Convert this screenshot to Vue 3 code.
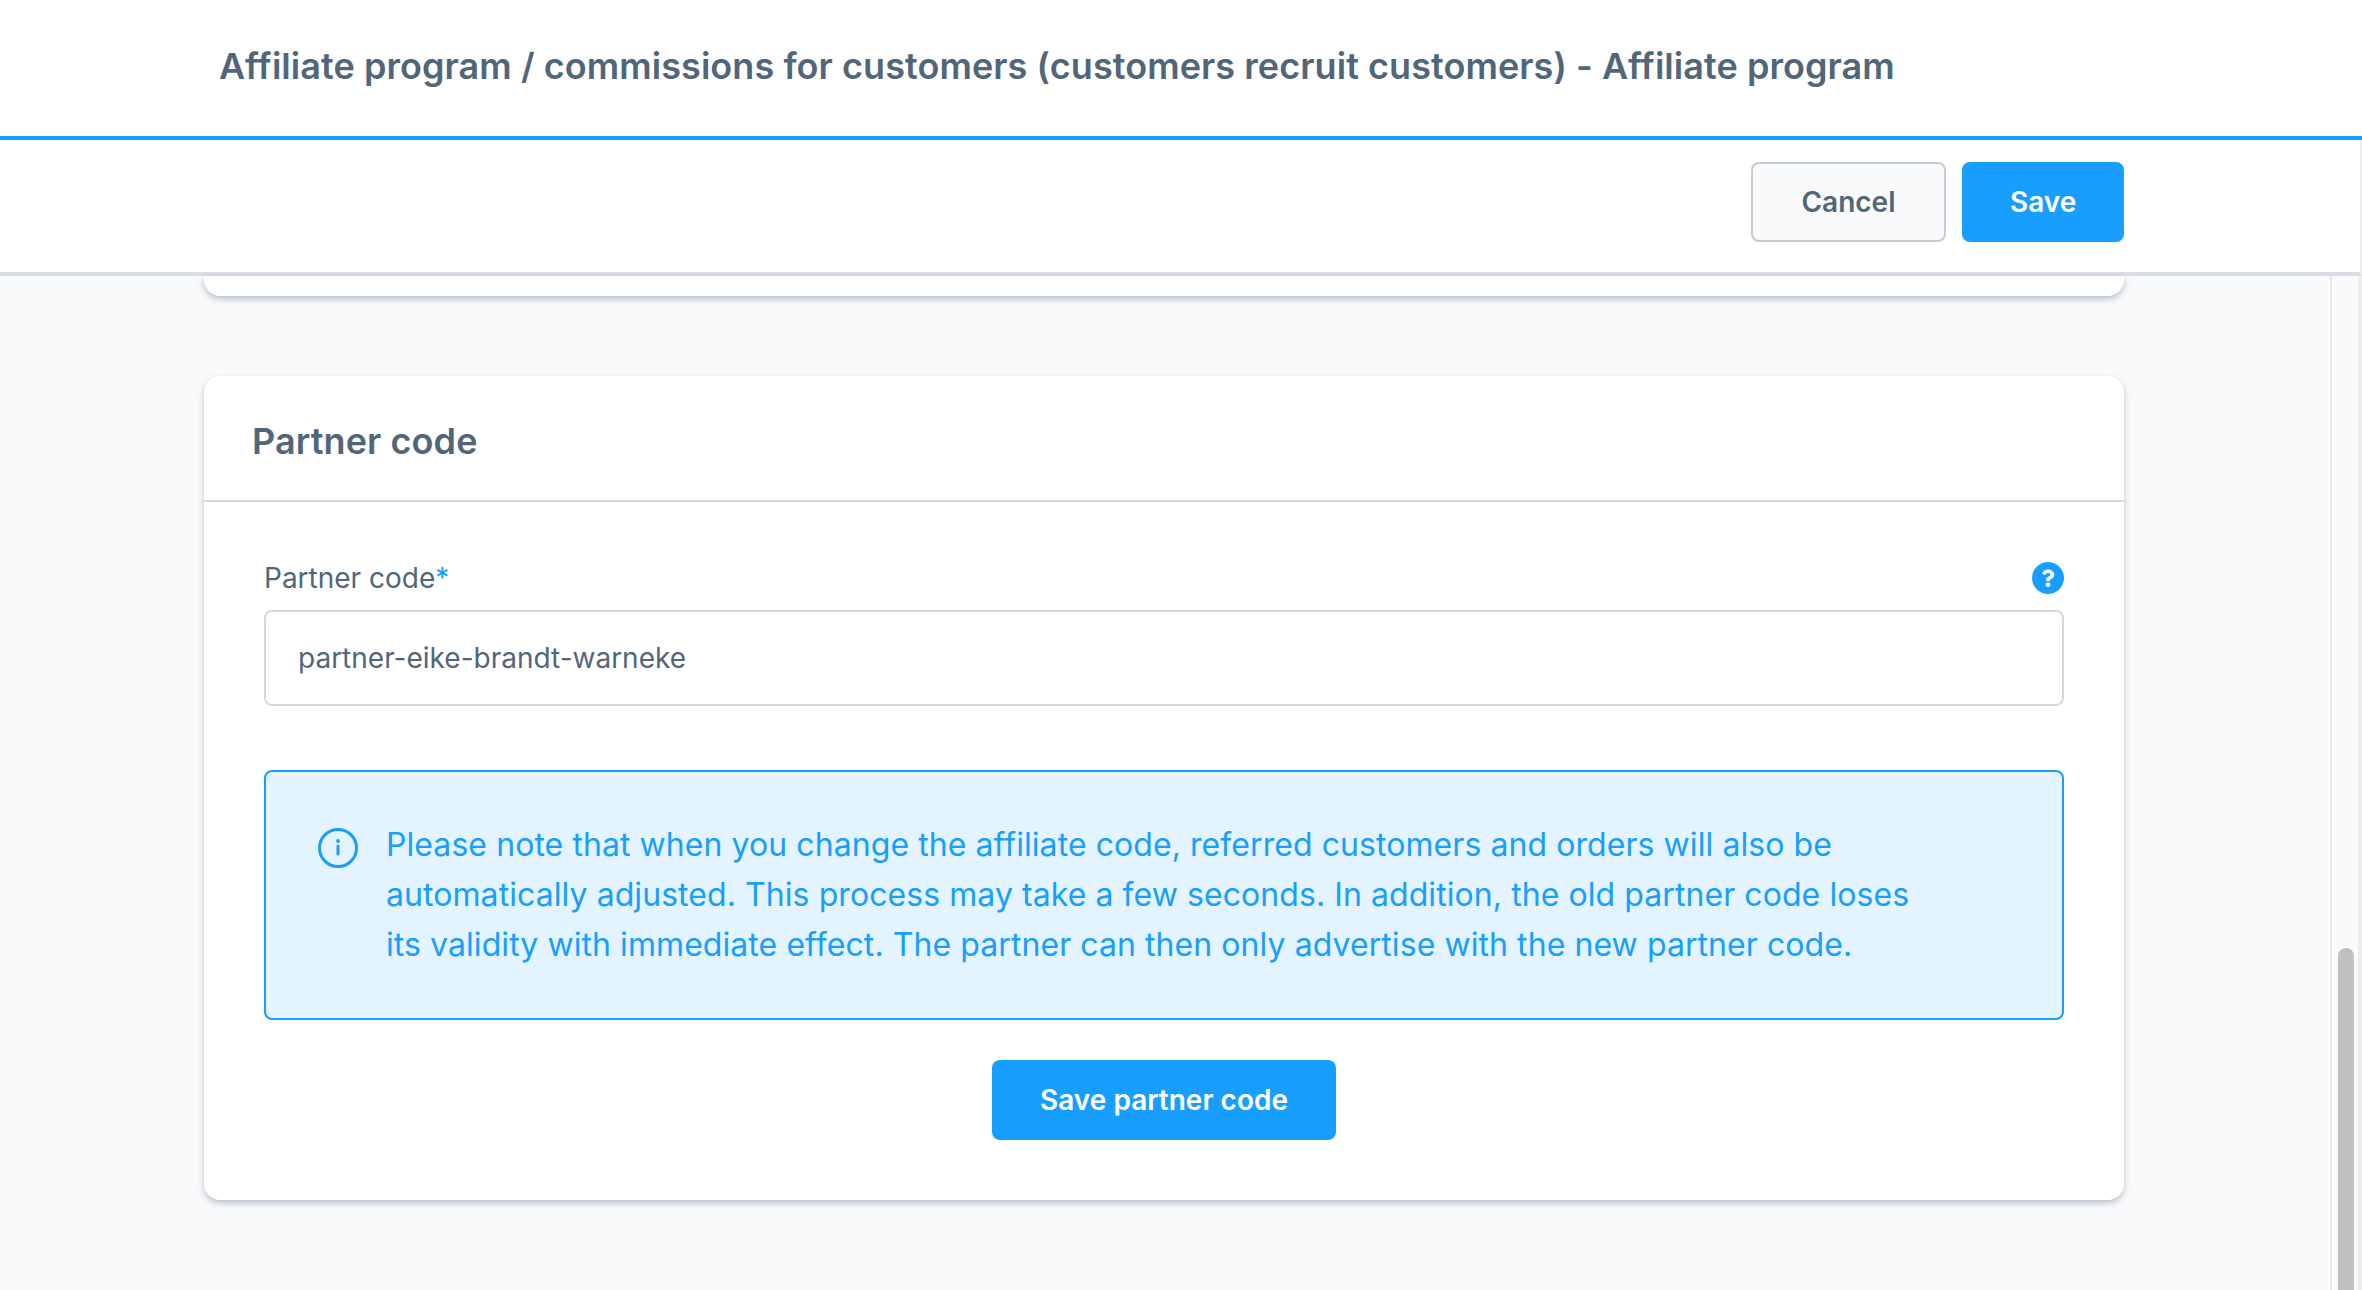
<script setup>
const title = 'Affiliate program / commissions for customers (customers recruit customers) - Affiliate program'
const partnerCode = 'partner-eike-brandt-warneke'
const notice = 'Please note that when you change the affiliate code, referred customers and orders will also be automatically adjusted. This process may take a few seconds. In addition, the old partner code loses its validity with immediate effect. The partner can then only advertise with the new partner code.'
</script>

<template>
  <div class="page">
    <header class="page-head">
      <h1>{{ title }}</h1>
    </header>

    <div class="toolbar">
      <button class="btn btn-ghost">Cancel</button>
      <button class="btn btn-primary">Save</button>
    </div>

    <div class="body">
      <main class="content">
        <div class="card-stub"></div>

        <section class="card">
          <div class="card-title">Partner code</div>
          <div class="card-body">
            <div class="field-head">
              <label>Partner code<span class="req">*</span></label>
              <svg class="help" viewBox="8 8 496 496">
                <circle cx="256" cy="256" r="248" fill="#189eff" />
                <path fill="#fff" transform="translate(256 256) scale(.8) translate(-256 -256)" d="M262.655 90c-54.497 0-89.255 22.957-116.549 63.758-3.536 5.286-2.353 12.415 2.715 16.258l34.699 26.31c5.205 3.947 12.621 3.008 16.665-2.122 17.864-22.658 30.113-35.797 57.303-35.797 20.429 0 45.698 13.148 45.698 32.958 0 14.976-12.363 22.667-32.534 33.976C247.128 238.528 216 254.941 216 296v4c0 6.627 5.373 12 12 12h56c6.627 0 12-5.373 12-12v-1.333c0-28.462 83.186-29.647 83.186-106.667 0-58.002-60.165-102-116.531-102zM256 338c-25.365 0-46 20.635-46 46 0 25.364 20.635 46 46 46s46-20.636 46-46c0-25.365-20.635-46-46-46z" />
              </svg>
            </div>
            <input class="input" type="text" :value="partnerCode" />

            <div class="notice">
              <svg class="notice-icon" viewBox="0 0 40 40" fill="none">
                <circle cx="20" cy="20" r="18.5" stroke="#189eff" stroke-width="3" />
                <rect x="18.5" y="16.5" width="3" height="11" rx="1.5" fill="#189eff" />
                <circle cx="20" cy="13" r="1.9" fill="#189eff" />
              </svg>
              <p>{{ notice }}</p>
            </div>

            <div class="actions">
              <button class="btn btn-primary btn-wide">Save partner code</button>
            </div>
          </div>
        </section>
      </main>

      <aside class="scrollbar">
        <div class="thumb"></div>
      </aside>
    </div>
  </div>
</template>

<style>
html, body {
  margin: 0;
  height: 100%;
  overflow: hidden;
}
</style>

<style scoped>
.page {
  height: 1290px;
  display: flex;
  flex-direction: column;
  background: #f9fafb;
  font-family: Inter, "Noto Sans", sans-serif;
  color: #52667a;
}

.page-head {
  height: 140px;
  box-sizing: border-box;
  background: #fff;
  border-bottom: 4px solid #189eff;
  display: flex;
  align-items: center;
  padding: 0 0 4px 219px;
}

.page-head h1 {
  margin: 0;
  font-size: 36px;
  font-weight: 600;
  letter-spacing: 0.06px;
  color: #52667a;
}

.toolbar {
  height: 136px;
  flex: none;
  box-sizing: border-box;
  background: #fff;
  border-bottom: 4px solid #d8dde6;
  border-right: 2px solid #ececec;
  display: flex;
  align-items: center;
  justify-content: flex-end;
  gap: 16px;
  padding: 0 236px 8px 0;
}

.btn {
  height: 80px;
  border-radius: 8px;
  font-family: inherit;
  font-size: 28px;
  font-weight: 600;
  padding: 0 48px;
  box-sizing: border-box;
}

.btn-ghost {
  width: 195px;
  background: #f9fafb;
  border: 2px solid #c4ccd6;
  color: #52667a;
}

.btn-primary {
  width: 162px;
  background: #189eff;
  border: none;
  color: #fff;
}

.btn-wide {
  width: 344px;
  padding: 0;
}

.body {
  flex: 1;
  min-height: 0;
  display: flex;
}

.content {
  flex: 1;
  padding: 0 206px 0 204px;
}

.card-stub {
  height: 20px;
  background: #fff;
  border-radius: 0 0 16px 16px;
  box-shadow: 0 3px 6px 0 rgba(120, 138, 155, 0.5);
  margin-bottom: 80px;
}

.card {
  background: #fff;
  border-radius: 16px;
  box-shadow: 0 3px 6px 0 rgba(120, 138, 155, 0.5);
}

.card-title {
  height: 126px;
  box-sizing: border-box;
  border-bottom: 2px solid #d1d9e0;
  display: flex;
  align-items: center;
  padding: 6px 0 0 48px;
  font-size: 36px;
  font-weight: 600;
  letter-spacing: 0.08px;
}

.card-body {
  padding: 60px 60px 60px;
}

.field-head {
  height: 32px;
  padding-bottom: 16px;
  display: flex;
  align-items: center;
  justify-content: space-between;
}

.field-head label {
  font-size: 28px;
  font-weight: 400;
}

.req {
  color: #189eff;
}

.help {
  width: 32px;
  height: 32px;
}

.input {
  display: block;
  width: 100%;
  height: 96px;
  box-sizing: border-box;
  border: 2px solid #d1d9e0;
  border-radius: 8px;
  padding: 0 32px;
  background: #fff;
  font-family: inherit;
  font-size: 28px;
  color: #52667a;
  outline: none;
}

.notice {
  margin-top: 64px;
  height: 250px;
  box-sizing: border-box;
  background: #e3f3ff;
  border: 2px solid #189eff;
  border-radius: 8px;
  padding: 48px 132px 0 52px;
  display: flex;
  align-items: flex-start;
  gap: 28px;
  color: #189eff;
}

.notice-icon {
  width: 40px;
  height: 40px;
  flex: none;
  margin-top: 8px;
}

.notice p {
  margin: 0;
  font-size: 32px;
  line-height: 50px;
  letter-spacing: 0.07px;
}

.actions {
  margin-top: 40px;
  display: flex;
  justify-content: center;
}

.scrollbar {
  width: 32px;
  flex: none;
  box-sizing: border-box;
  background: #fafafa;
  border-left: 2px solid #e8e8e8;
  border-right: 4px solid #ececec;
  padding: 672px 4px 0 6px;
}

.thumb {
  height: 342px;
  background: #c1c1c1;
  border-radius: 8px 8px 0 0;
}
</style>
